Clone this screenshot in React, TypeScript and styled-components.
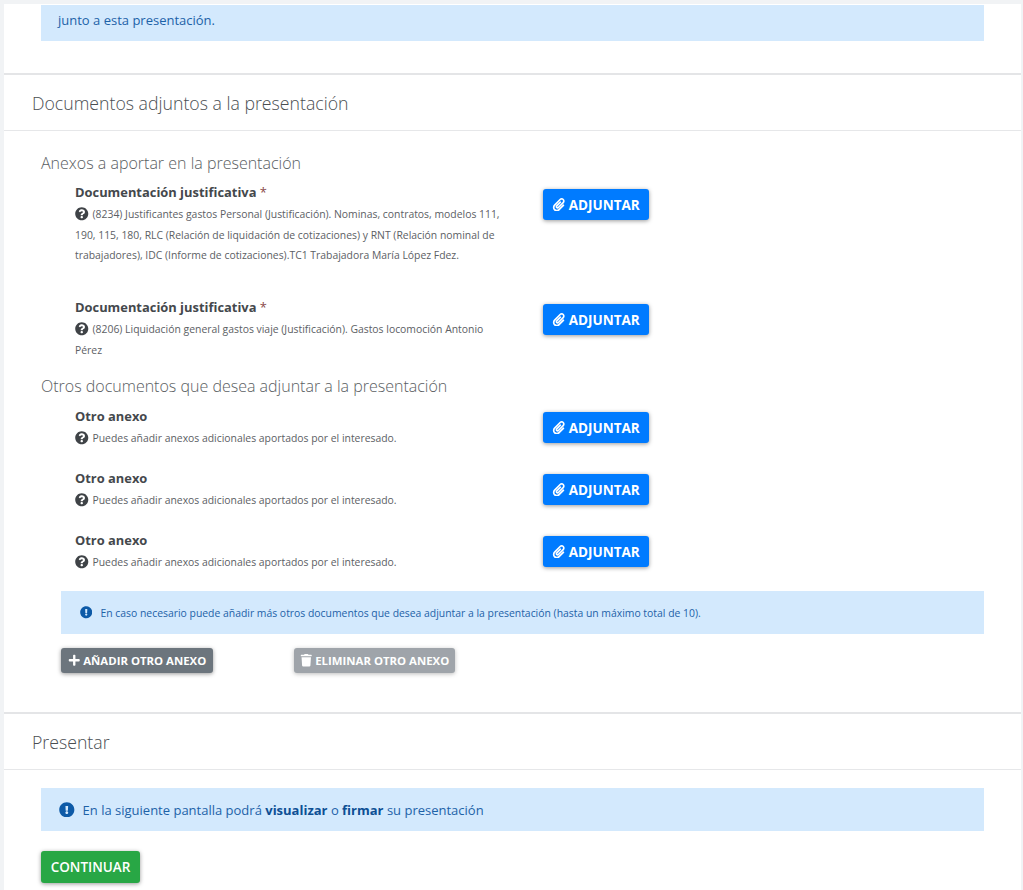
import React from 'react';
import styled, { createGlobalStyle } from 'styled-components';
import { FaPaperclip, FaQuestionCircle, FaExclamationCircle, FaPlus, FaTrash } from 'react-icons/fa';

const GlobalStyle = createGlobalStyle`
  html, body {
    margin: 0;
    padding: 0;
    background: #f1f3f5;
    font-family: "Open Sans", "Liberation Sans", sans-serif;
    color: #3f4347;
  }
`;

const Page = styled.div`
  height: 890px;
  overflow: hidden;
  padding: 4px 2px 0 4px;
  box-sizing: border-box;
`;

const Card = styled.div`
  background: #fff;
  height: 100%;
`;

const Section = styled.section`
  border-bottom: 2px solid #e4e5e7;
`;

const SectionHeader = styled.h2`
  margin: 0;
  height: 56px;
  padding-left: 28px;
  box-sizing: border-box;
  display: flex;
  align-items: center;
  font-size: 17.7px;
  font-weight: 300;
  color: #4a4e52;
  border-bottom: 1px solid #e6e7e9;
`;

const SectionBody = styled.div<{ $top: number; $bottom: number }>`
  padding: ${p => p.$top}px 37px ${p => p.$bottom}px 37px;
`;

const Alert = styled.div<{ $indent?: number; $height: number; $size: number; $pad: number; $lift?: number }>`
  margin-left: ${p => p.$indent ?? 0}px;
  height: ${p => p.$height}px;
  padding-left: ${p => p.$pad}px;
  padding-bottom: ${p => p.$lift ?? 0}px;
  box-sizing: border-box;
  display: flex;
  align-items: center;
  gap: 8px;
  background: #d3e9fd;
  color: #1d62a8;
  font-size: ${p => p.$size}px;

  svg {
    flex: none;
    color: #0d5aa7;
    font-size: 1.2em;
  }
  b {
    color: #0d4f94;
    font-weight: 700;
  }
`;

const SubTitle = styled.h3<{ $gap: number }>`
  margin: 0 0 ${p => p.$gap}px;
  font-size: 16px;
  line-height: 22px;
  font-weight: 300;
  color: #5a5e62;
`;

const DocRow = styled.div<{ $height: number }>`
  display: grid;
  grid-template-columns: 468px auto;
  height: ${p => p.$height}px;
  padding-left: 34px;
`;

const DocLabel = styled.div`
  font-size: 12.9px;
  line-height: 18px;
  font-weight: 700;
  color: #44484c;

  span {
    color: #8a4a4a;
    font-weight: 400;
  }
`;

const DocHelp = styled.div`
  width: 430px;
  margin-top: 3px;
  font-size: 10.4px;
  line-height: 20.5px;
  color: #5c6064;

  svg {
    font-size: 13.5px;
    color: #3f4347;
    vertical-align: -2.5px;
    margin-right: 4px;
  }
`;

const Button = styled.button<{ $bg: string; $fade?: boolean }>`
  display: inline-flex;
  align-items: center;
  justify-content: center;
  gap: 3px;
  padding: 0;
  border: 0;
  border-radius: 3px;
  background: ${p => p.$bg};
  color: #fff;
  font-family: "Open Sans", sans-serif;
  font-weight: 600;
  box-shadow: 0 1px 4px rgba(0, 0, 0, 0.4);
  opacity: ${p => (p.$fade ? 0.65 : 1)};
`;

const AttachButton = styled(Button)<{ $top: number }>`
  width: 106px;
  height: 31px;
  margin-top: ${p => p.$top}px;
  font-size: 13.5px;
  font-weight: 700;

  svg {
    font-size: 13.5px;
  }
`;

const ActionBar = styled.div`
  display: flex;
  gap: 81px;
  margin: 14px 0 0 20px;
`;

const SmallButton = styled(Button)<{ $width: number }>`
  width: ${p => p.$width}px;
  height: 25px;
  font-size: 11.4px;
  font-weight: 700;

  svg {
    font-size: 12.5px;
  }
`;

const ContinueButton = styled(Button)`
  width: 99px;
  height: 32px;
  margin-top: 20px;
  font-size: 13.5px;
`;

const DocumentItem: React.FC<{ label: React.ReactNode; help: string; height: number; buttonTop: number }> = ({
  label,
  help,
  height,
  buttonTop,
}) => (
  <DocRow $height={height}>
    <div>
      <DocLabel>{label}</DocLabel>
      <DocHelp><FaQuestionCircle />{help}</DocHelp>
    </div>
    <div>
      <AttachButton $bg="#007bff" $top={buttonTop}><FaPaperclip />ADJUNTAR</AttachButton>
    </div>
  </DocRow>
);

const otherHelp = 'Puedes añadir anexos adicionales aportados por el interesado.';

export default function App() {
  return (
    <Page>
      <GlobalStyle />
      <Card>
        <Section>
          <SectionBody $top={1} $bottom={32}>
            <Alert $height={36} $size={13} $pad={17} $lift={6}>junto a esta presentación.</Alert>
          </SectionBody>
        </Section>
        <Section>
          <SectionHeader>Documentos adjuntos a la presentación</SectionHeader>
          <SectionBody $top={21} $bottom={39}>
            <SubTitle $gap={9}>Anexos a aportar en la presentación</SubTitle>
            <DocumentItem
              height={115}
              buttonTop={6}
              label={<>Documentación justificativa <span>*</span></>}
              help="(8234) Justificantes gastos Personal (Justificación). Nominas, contratos, modelos 111, 190, 115, 180, RLC (Relación de liquidación de cotizaciones) y RNT (Relación nominal de trabajadores), IDC (Informe de cotizaciones).TC1 Trabajadora María López Fdez."
            />
            <DocumentItem
              height={77}
              buttonTop={6}
              label={<>Documentación justificativa <span>*</span></>}
              help="(8206) Liquidación general gastos viaje (Justificación). Gastos locomoción Antonio Pérez"
            />
            <SubTitle $gap={10}>Otros documentos que desea adjuntar a la presentación</SubTitle>
            <DocumentItem height={62} buttonTop={5} label="Otro anexo" help={otherHelp} />
            <DocumentItem height={62} buttonTop={5} label="Otro anexo" help={otherHelp} />
            <DocumentItem height={60} buttonTop={5} label="Otro anexo" help={otherHelp} />
            <Alert $indent={20} $height={43} $size={10.4} $pad={19}>
              <FaExclamationCircle />
              En caso necesario puede añadir más otros documentos que desea adjuntar a la presentación (hasta un máximo total de 10).
            </Alert>
            <ActionBar>
              <SmallButton $bg="#6c757d" $width={152}><FaPlus />AÑADIR OTRO ANEXO</SmallButton>
              <SmallButton $bg="#6c757d" $width={161} $fade><FaTrash />ELIMINAR OTRO ANEXO</SmallButton>
            </ActionBar>
          </SectionBody>
        </Section>
        <div>
          <SectionHeader>Presentar</SectionHeader>
          <SectionBody $top={18} $bottom={0}>
            <Alert $height={43} $size={13} $pad={18}>
              <FaExclamationCircle />
              <span>En la siguiente pantalla podrá <b>visualizar</b> o <b>firmar</b> su presentación</span>
            </Alert>
            <ContinueButton $bg="#28a745">CONTINUAR</ContinueButton>
          </SectionBody>
        </div>
      </Card>
    </Page>
  );
}
